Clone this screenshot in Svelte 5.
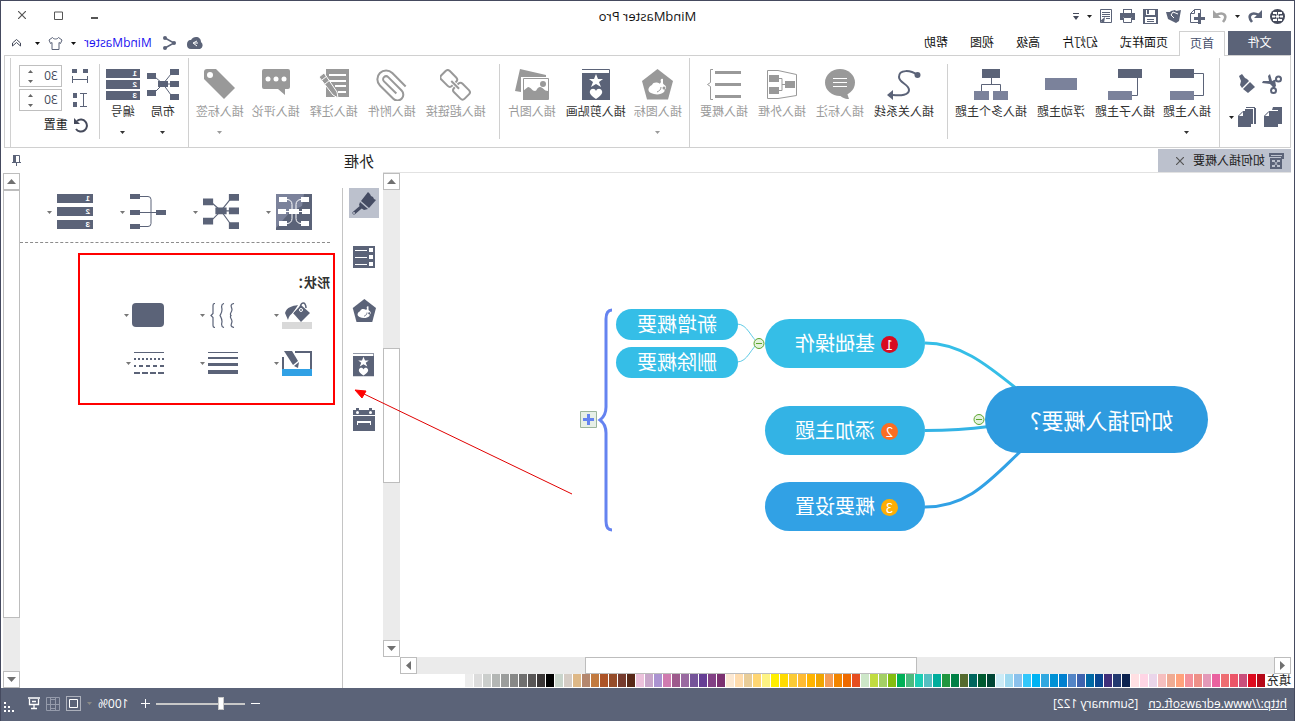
<script lang="ts">
  type Tool = {
    icon: string;
    label: string;
    dim?: boolean;
    split?: boolean;
  };

  type Topic = {
    text: string;
    x: number;
    y: number;
    w: number;
    h: number;
    fill: string;
    size: number;
    badge?: number;
    badgeFill?: string;
  };

  const quick = ['logo', 'redo', 'caret', 'undo', 'newdoc', 'open', 'save', 'print', 'report', 'caret', 'more'];

  const tabs = ['页面样式', '幻灯片', '高级', '视图', '帮助'];

  const groups: { id: string; full: boolean; tools: Tool[] }[] = [
    {
      id: 'topics',
      full: false,
      tools: [
        { icon: 'topic', label: '插入主题', split: true },
        { icon: 'subtopic', label: '插入子主题' },
        { icon: 'floating', label: '浮动主题' },
        { icon: 'multi', label: '插入多个主题' }
      ]
    },
    {
      id: 'relations',
      full: true,
      tools: [
        { icon: 'relation', label: '插入关系线' },
        { icon: 'callout', label: '插入标注', dim: true },
        { icon: 'boundary', label: '插入外框', dim: true },
        { icon: 'summary', label: '插入概要', dim: true }
      ]
    },
    {
      id: 'art',
      full: false,
      tools: [
        { icon: 'mark', label: '插入图标', dim: true, split: true },
        { icon: 'clipart', label: '插入剪贴画' },
        { icon: 'picture', label: '插入图片', dim: true }
      ]
    },
    {
      id: 'attach',
      full: true,
      tools: [
        { icon: 'chain', label: '插入超链接', dim: true },
        { icon: 'clip', label: '插入附件', dim: true },
        { icon: 'note', label: '插入注释', dim: true },
        { icon: 'comment', label: '插入评论', dim: true },
        { icon: 'tag', label: '插入标签', dim: true, split: true }
      ]
    },
    {
      id: 'arrange',
      full: false,
      tools: [
        { icon: 'layout', label: '布局', split: true },
        { icon: 'numbering', label: '编号', split: true }
      ]
    }
  ];

  const topics: Topic[] = [
    { text: '如何插入概要？', x: 83, y: 213, w: 223, h: 67, fill: '#2e9bdf', size: 22 },
    { text: '基础操作', x: 366, y: 146, w: 160, h: 49, fill: '#35bee7', size: 20, badge: 1, badgeFill: '#d80b20' },
    { text: '添加主题', x: 366, y: 233, w: 160, h: 49, fill: '#33b3e5', size: 20, badge: 2, badgeFill: '#fb6e22' },
    { text: '概要设置', x: 366, y: 309, w: 160, h: 49, fill: '#31a1e5', size: 20, badge: 3, badgeFill: '#fdae04' },
    { text: '新增概要', x: 553, y: 136, w: 122, h: 31, fill: '#35bee7', size: 20 },
    { text: '删除概要', x: 553, y: 174, w: 122, h: 31, fill: '#35bee7', size: 20 }
  ];

  const palette = [
    '#b50717', '#dd0a1e', '#c94f7c', '#ec5568', '#ee6d72', '#e9619f', '#e399b8', '#ee9088', '#f3919b', '#ffa27c',
    '#efab93', '#f6bfbf', '#ead5ea', '#ffd5e5', '#ffe0e3', '#0c2350', '#233a70', '#402f7a', '#0a4690', '#0069a5',
    '#3e63ae', '#5485c6', '#0080d0', '#0091d5', '#30a8e0', '#00b3f3', '#33c7fb', '#8bc1ec', '#9ed9f0', '#ccebf6',
    '#004535', '#005a30', '#00665e', '#556b2f', '#008046', '#20963f', '#00ad9c', '#55bfc1', '#1ccdb3', '#4bba7f',
    '#00b058', '#84bd10', '#a4d065', '#c1dc40', '#cde7c8', '#e64e20', '#ee6a00', '#f28500', '#f49c56', '#f0a500',
    '#ffb400', '#ffbb33', '#fbcb35', '#ffdb00', '#ffef00', '#fdf383', '#ffd673', '#e9cd98', '#ffdcae', '#fce8d2',
    '#7b3070', '#824085', '#663f95', '#755499', '#9969a0', '#9d5a8c', '#d07bb0', '#ab93d1', '#c8a6ca', '#ecc2dc',
    '#582817', '#763b2e', '#964d2a', '#ad5427', '#c27a3f', '#b4876e', '#deb887', '#d5ccc5', '#c9d4cb', '#000000',
    '#3b3737', '#585656', '#6f6f6f', '#878887', '#9b9d9c', '#b3b6b4', '#cbcecc', '#dcdcdc', '#ededed'
  ];

  const rail = ['paint', 'outline', 'mark', 'clipart', 'calendar'];
  const styles = ['theme', 'layoutBig', 'structure', 'numberingBig'];
  const shapeTools = ['fill', 'braces', 'rounded', 'line', 'weight', 'dash'];

  let activeRail = $state('paint');
  let gapX = $state(30);
  let gapY = $state(30);
  let zoom = $state(100);
</script>

{#snippet caret()}
  <svg class="caret" width="5" height="3" viewBox="0 0 5 3"><path d="M0 0h5L2.5 3z" fill="currentColor" /></svg>
{/snippet}

{#snippet pentagon()}
  <path d="M15.5 0 31 12l-5 18.500H5L0 12z" fill="currentColor" />
  <path d="M12 17c0-4 8-5 9-1 4 2 5 6 1 8-4 2-10 2-13-1-2-2 1-5 3-6z" fill="#fff" />
  <path d="M10 10c2-1 3 1 2 3l2 3-3 5-4-1c-1-4 3-4 3-6z" fill="#fff" />
  <circle cx="9" cy="19" r="1.500" fill="currentColor" />
  <path d="M12 18c0 3 2 4 4 5" fill="none" stroke="currentColor" />
{/snippet}

{#snippet badgeCard()}
  <path d="M.5 4V.5H28" fill="none" stroke="currentColor" />
  <path d="M0 4h28v27H0z" fill="currentColor" />
  <path d="m14 5 2 5h5l-4 3 2 5-5-3-5 3 2-5-4-3h5z" fill="#fff" />
  <path d="M14 30c-4-3-7-5-6-8 1-3 5-3 6 0 1-3 5-3 6 0 1 3-2 5-6 8z" fill="#fff" />
{/snippet}

{#snippet bars(w: number, step: number)}
  {#each [1, 2, 3] as n}
    <rect x="0" y={(n - 1) * step} width={w} height="9" fill="#5b6378" />
    <text x="3" y={(n - 1) * step + 7} font-size="8" font-weight="700" fill="#fff" font-family="Liberation Sans, sans-serif">{n}</text>
  {/each}
{/snippet}

{#snippet icon(name: string)}
  {#if name === 'caret'}
    {@render caret()}
  {:else if name === 'logo'}
    <svg width="15" height="15" viewBox="0 0 15 15"><circle cx="7.500" cy="7.500" r="7.500" fill="#454a5b" /><path d="M3 3h4v2H3zM8 3h4v2H8zM2 6.500h3v2H2zM6 6.500h3v2H6zM10 6.500h3v2h-3zM3 10h4v2H3zM8 10h4v2H8z" fill="#fff" /><path d="M6 4.500 9 10M9 4.500 6 10M4 7.500h7" stroke="#fff" stroke-width=".6" /></svg>
  {:else if name === 'redo'}
    <svg width="14" height="13" viewBox="0 0 14 13"><path d="M10 12c5-6 1-11-7-7" fill="none" stroke="#5b6378" stroke-width="2.600" /><path d="M0 0v8h8z" fill="#5b6378" /></svg>
  {:else if name === 'undo'}
    <svg width="14" height="13" viewBox="0 0 14 13"><path d="M4 12c-5-6-1-11 7-7" fill="none" stroke="#a3a3a3" stroke-width="2.600" /><path d="M14 0v8H6z" fill="#a3a3a3" /></svg>
  {:else if name === 'newdoc'}
    <svg width="16" height="15" viewBox="0 0 16 15"><path d="M7 13.500h7.500v-9l-4-4H4.500V6M10.500.5v4h4" fill="none" stroke="#5b6378" /><path d="M5.500 4v11M0 9.500h11" stroke="#5b6378" stroke-width="3" /></svg>
  {:else if name === 'open'}
    <svg width="15" height="14" viewBox="0 0 15 14"><path d="m0 1 5 1 1-1 4 1 1 1h4l-2 7-8 4-3-2z" fill="#5b6378" /><path d="m3 5 5-2 2 3-3 3" fill="none" stroke="#fff" /></svg>
  {:else if name === 'save'}
    <svg width="15" height="15" viewBox="0 0 15 15"><path d="M0 0h15v15H0z" fill="#5b6378" /><path d="M3 1h9v5H3zM2 8h11v6H2z" fill="#fff" /><path d="M9 1h2v4H9zM4 10h7v1H4zM4 12h7v1H4z" fill="#5b6378" /></svg>
  {:else if name === 'print'}
    <svg width="15" height="14" viewBox="0 0 15 14"><path d="M3 0h9v4H3zM0 4h15v7H0z" fill="#5b6378" /><path d="M4 1h7v3H4zM3 8h9v5H3z" fill="#fff" /><path d="M3.500 8.500h8v5h-8z" fill="none" stroke="#5b6378" /></svg>
  {:else if name === 'report'}
    <svg width="12" height="14" viewBox="0 0 12 14"><path d="M.5.500h11v13H.500zM2 3.500h8M2 5.500h8M2 7.500h8M2 9.500h4" fill="none" stroke="#5b6378" /><path d="m7 8 5 4-4 2z" fill="#5b6378" /></svg>
  {:else if name === 'more'}
    <svg width="6" height="7" viewBox="0 0 6 7"><path d="M0 .5h6" stroke="#454a5b" /><path d="M0 3h6L3 7z" fill="#454a5b" /></svg>
  {:else if name === 'cloud'}
    <svg width="17" height="12" viewBox="0 0 17 12"><path d="M4 12a4 4 0 0 1-1-7c0-3 2-5 5-5 2 0 4 1 5 3 3 0 4 2 4 5 0 2-1 4-4 4z" fill="#5b6378" /><path d="m7 4 4 2-4 3M10 6H6" fill="none" stroke="#fff" /></svg>
  {:else if name === 'share'}
    <svg width="13" height="14" viewBox="0 0 13 14"><path d="M11 2 2 7l9 5" fill="none" stroke="#5b6378" stroke-width="1.500" /><circle cx="11" cy="2" r="2" fill="#5b6378" /><circle cx="2" cy="7" r="2" fill="#5b6378" /><circle cx="11" cy="12" r="2" fill="#5b6378" /></svg>
  {:else if name === 'shirt'}
    <svg width="15" height="13" viewBox="0 0 15 13"><path d="M4.500.500 1 3l1.500 3.500 1.500-1v7h7v-7l1.500 1L14 3 10.500.500c-1 2-5 2-6 0z" fill="none" stroke="#5b6378" /></svg>
  {:else if name === 'up'}
    <svg width="9" height="8" viewBox="0 0 9 8"><path d="m.5 4 4-3.500 4 3.500M.5 7l4-3.500 4 3.500M.500 4v3M8.500 4v3" fill="none" stroke="#454a5b" /></svg>
  {:else if name === 'cut'}
    <svg width="20" height="20" viewBox="0 0 20 20"><g fill="none" stroke="#5b6378" stroke-width="2"><circle cx="3.500" cy="5" r="2.500" /><circle cx="8.500" cy="16.500" r="2.500" /><path d="m6 6 3 2M8 14l1-5" /></g><path d="m7 6 3 1 2-7 2 2-1 5h6l1 2-8 1-4 4-2-2z" fill="#5b6378" /></svg>
  {:else if name === 'brush'}
    <svg width="18" height="20" viewBox="0 0 18 20"><path d="m14 0 3 2-2 5 1 4-2 3-7-7 2-2 2-1z" fill="#5b6378" /><path d="m6 8 7 7-5 4-7-6z" fill="#5b6378" /></svg>
  {:else if name === 'copy'}
    <svg width="18" height="20" viewBox="0 0 18 20"><path d="M0 0h9v2H2v15H0z" fill="#5b6378" /><path d="M0 0h9l1 3H4v14H0z" fill="#5b6378" /><path d="M4 4h9l5 5v11H4z" fill="#5b6378" /><path d="M13 4v5h5z" fill="#fff" /><path d="m13 4.500 4.500 4.500" stroke="#5b6378" /></svg>
  {:else if name === 'paste'}
    <svg width="18" height="20" viewBox="0 0 18 20"><path d="M0 1h2v16H0zM1 0h9v1H1zM3 2h8v2H5v13H3z" fill="#5b6378" /><path d="M5 4h8l5 5v11H5z" fill="#5b6378" /><path d="M13 4v5h5z" fill="#fff" /><path d="m13 4.500 4.500 4.500" stroke="#5b6378" /></svg>
  {:else if name === 'topic'}
    <svg width="34" height="32" viewBox="0 0 34 32"><path d="M10 0h24v9H10z" fill="#5b6378" /><path d="M10 22h24v9H10z" fill="#7b829b" /><path d="M10 4.500H.500v22H10" fill="none" stroke="#5b6378" /></svg>
  {:else if name === 'subtopic'}
    <svg width="34" height="32" viewBox="0 0 34 32"><path d="M0 0h24v9H0z" fill="#5b6378" /><path d="M10 22h24v9H10z" fill="#7b829b" /><path d="M4.500 9v17.500H10" fill="none" stroke="#5b6378" /></svg>
  {:else if name === 'floating'}
    <svg width="32" height="32" viewBox="0 0 32 32"><path d="M0 9h32v12H0z" fill="#7b829b" /></svg>
  {:else if name === 'multi'}
    <svg width="34" height="32" viewBox="0 0 34 32"><path d="M8 0h18v9H8z" fill="#5b6378" /><path d="M0 22h15v9H0zM19 22h15v9H19z" fill="#7b829b" /><path d="M16.500 9v6.500M7.500 22v-6.500h19V22" fill="none" stroke="#5b6378" /></svg>
  {:else if name === 'relation'}
    <svg width="34" height="32" viewBox="0 0 34 32"><path d="M4 6c6-5 18-6 18 2 0 6-10 7-10 13 0 5 8 6 16 5" fill="none" stroke="#5b6378" stroke-width="2" /><circle cx="3.500" cy="6" r="3" fill="#5b6378" /><path d="m34 26-6-5v10z" fill="#5b6378" /></svg>
  {:else if name === 'callout'}
    <svg width="30" height="32" viewBox="0 0 30 32"><ellipse cx="15" cy="13.500" rx="15" ry="13.500" fill="currentColor" /><path d="m6 30 2-6 8 2c-3 2-5 4-10 4z" fill="currentColor" /><path d="M8 9.500h14M8 13.500h14M8 17.500h14" stroke="#fff" /></svg>
  {:else if name === 'boundary'}
    <svg width="30" height="32" viewBox="0 0 30 32"><path d="M.5 5.500 19 1.500h10.500v28H19L.500 26.500z" fill="none" stroke="currentColor" /><path d="M2 12h10v7H2zM18 6h10v7H18zM18 18h10v7H18z" fill="currentColor" /><path d="M12 15.500h3M18 9.500h-3v12h3" fill="none" stroke="currentColor" /></svg>
  {:else if name === 'summary'}
    <svg width="34" height="32" viewBox="0 0 34 32"><path d="M0 2h26v3H0zM0 14h26v3H0zM0 26h26v3H0z" fill="currentColor" /><path d="M28 .500h2.500v13l3 2-3 2v13H28" fill="none" stroke="currentColor" /></svg>
  {:else if name === 'mark'}
    <svg class="glyph" viewBox="0 0 31 32">{@render pentagon()}</svg>
  {:else if name === 'clipart'}
    <svg class="glyph" viewBox="0 0 28 32">{@render badgeCard()}</svg>
  {:else if name === 'picture'}
    <svg width="34" height="32" viewBox="0 0 34 32"><path d="M3 6 29 0l5 22-6 1V8H3z" fill="currentColor" /><path d="M.5 9.500h25v21H.500z" fill="#fff" stroke="currentColor" /><path d="M1 22c4 0 5-4 8-4s3 4 5 4c3 0 4-4 7-4l5 4v9H1z" fill="currentColor" /><circle cx="6" cy="15" r="3" fill="currentColor" /></svg>
  {:else if name === 'chain'}
    <svg width="31" height="32" viewBox="0 0 31 32"><g fill="none" stroke="currentColor" stroke-width="2" transform="rotate(-45 15.500 15.500)"><path d="M14 18v1c0 2-1 3-3 3H2c-2 0-3-1-3-3v-6c0-2 1-3 3-3h9c2 0 3 1 3 3v1" /><path d="M17 14v-1c0-2 1-3 3-3h9c2 0 3 1 3 3v6c0 2-1 3-3 3h-9c-2 0-3-1-3-3v-1" /><path d="M10 16h11" /></g></svg>
  {:else if name === 'clip'}
    <svg width="32" height="32" viewBox="1 1 22 22"><path d="m21.400 11-9.200 9.200a6 6 0 0 1-8.500-8.500l9.200-9.200a4 4 0 0 1 5.700 5.700l-9.200 9.200a2 2 0 0 1-2.900-2.900l8.500-8.400" fill="none" stroke="currentColor" stroke-width="1.400" transform="rotate(180 12 12)" /></svg>
  {:else if name === 'note'}
    <svg width="31" height="32" viewBox="0 0 31 32"><path d="M0 0h23v28H0z" fill="currentColor" /><path d="M3 6h17M3 12h17M3 17h11M3 23h8" stroke="#fff" stroke-width="2" /><path d="m25 4 5 4-14 18-5 3 1-6z" fill="currentColor" stroke="#fff" /><path d="m22 7 5 4M19 11l5 4" stroke="#fff" /></svg>
  {:else if name === 'comment'}
    <svg width="28" height="32" viewBox="0 0 28 32"><path d="M2 0h24q2 0 2 2v16q0 2-2 2H12l-7 6v-6H2q-2 0-2-2V2q0-2 2-2z" fill="currentColor" /><circle cx="6" cy="10" r="2.500" fill="#fff" /><circle cx="14" cy="10" r="2.500" fill="#fff" /><circle cx="22" cy="10" r="2.500" fill="#fff" /></svg>
  {:else if name === 'tag'}
    <svg width="31" height="32" viewBox="0 0 31 32"><path d="M31 3q0-3-3-3h-9L0 19l11 11 20-20z" fill="currentColor" /><circle cx="25" cy="6" r="3" fill="#fff" /></svg>
  {:else if name === 'layout' || name === 'layoutBig'}
    <svg width={name === 'layout' ? 32 : 36} height={name === 'layout' ? 32 : 36} viewBox="0 0 32 32"><path d="M0 0h9v6H0zM0 12h9v6H0zM0 25h9v6H0zM11 12h10v6H11zM23 4h9v6h-9zM23 21h9v6h-9z" fill="#5b6378" /><path d="m8 5 8 10L8 26M24 8l-8 7 8 8M8 15h8" fill="none" stroke="#5b6378" /></svg>
  {:else if name === 'numbering'}
    <svg width="34" height="32" viewBox="0 0 34 32">{@render bars(34, 11)}</svg>
  {:else if name === 'numberingBig'}
    <svg width="36" height="36" viewBox="0 0 36 36">{@render bars(36, 13)}</svg>
  {:else if name === 'structure'}
    <svg width="36" height="36" viewBox="0 0 36 36"><path d="M0 16h10v5H0zM26 0h10v5H26zM26 16h10v5H26zM26 30h10v5H26z" fill="#5b6378" /><path d="M10 18.500h16M26 2.500h-8q-3 0-3 3v24q0 3 3 3h8" fill="none" stroke="#5b6378" /></svg>
  {:else if name === 'theme'}
    <svg width="36" height="36" viewBox="0 0 36 36"><path d="M0 0h36v36H0z" fill="#5b6378" /><path d="M8 0h28v34L22 18 10 12z" fill="#7b829b" /><path d="M3 3h8v5H3zM2 15h8v5H2zM3 27h8v5H3zM25 3h8v5h-8zM26 15h8v5h-8zM25 27h8v5h-8zM13 15h10v5H13z" fill="#fff" /><path d="M11 5.500c3 0 5 2 5 5v14c0 3-2 5-5 5M25 5.500c-3 0-5 2-5 5v14c0 3 2 5 5 5M10 17.500h16" fill="none" stroke="#fff" /></svg>
  {:else if name === 'gapX'}
    <svg width="16" height="15" viewBox="0 0 16 15"><path d="M0 0h5v4H0zM11 0h5v4h-5z" fill="#5b6378" /><path d="M.5 7v7M15.500 7v7M0 10.500h16" stroke="#5b6378" /></svg>
  {:else if name === 'gapY'}
    <svg width="16" height="15" viewBox="0 0 16 15"><path d="M11 0h4v5h-4zM11 9h4v5h-4z" fill="#5b6378" /><path d="M1 .500h7M1 13.500h7M4.500 0v14" stroke="#5b6378" /></svg>
  {:else if name === 'reset'}
    <svg width="15" height="15" viewBox="0 0 15 15"><path d="M11 3a6 6 0 1 0 1 8" fill="none" stroke="#454a5b" stroke-width="2" /><path d="M14 0v6H8z" fill="#454a5b" /></svg>
  {:else if name === 'doc'}
    <svg width="16" height="16" viewBox="0 0 16 16"><path d="M0 0h15v4h-1v12H2V6H0z" fill="#5b6378" /><path d="M2 2.500h11M3 4.500h11" stroke="#bcc1cd" /><path d="M4 7h3v2H4zM9 7h3v2H9zM4 12h3v2H4zM9 12h3v2H9z" fill="#bcc1cd" /><path d="m6 8 4 5M10 8l-4 5" stroke="#bcc1cd" /></svg>
  {:else if name === 'pin'}
    <svg width="9" height="11" viewBox="0 0 9 11"><path d="M1.500.500h6v7h-6zM0 7.500h9M4.500 8v3" fill="none" stroke="#5b6378" /><path d="M5 0h3v8H5z" fill="#5b6378" /></svg>
  {:else if name === 'paint'}
    <svg width="24" height="24" viewBox="0 0 24 24"><path d="m8 1 7 9-8 7-7-8 2-1 1-2 2-1 1-2z" fill="#454c63" /><path d="m16 11 1 3-2 3-3 2-4-1z" fill="#454c63" /><path d="m15 16 7 6" stroke="#454c63" stroke-width="3" stroke-linecap="round" /><circle cx="22" cy="22" r="1" fill="#bcc1cd" /></svg>
  {:else if name === 'outline'}
    <svg width="22" height="22" viewBox="0 0 22 22"><path d="M0 0h22v22H0z" fill="#5b6378" /><path d="M2 2h4v4H2zM2 9h4v4H2zM2 16h4v4H2zM8 4h12v1H8zM8 11h12v1H8zM8 18h12v1H8z" fill="#fff" /></svg>
  {:else if name === 'calendar'}
    <svg width="22" height="23" viewBox="0 0 22 23"><path d="M0 2h3V0h3v2h10V0h3v2h3v5H0zM0 8h22v15H0z" fill="#5b6378" /><path d="M4 13h14v4h-1v-2H5v2H4z" fill="#fff" /><circle cx="4.500" cy="4.500" r="1.500" fill="#fff" /><circle cx="17.500" cy="4.500" r="1.500" fill="#fff" /></svg>
  {:else if name === 'fill'}
    <svg width="30" height="27" viewBox="0 0 30 27"><path d="M0 20h30v7H0z" fill="#d9d9d9" /><path d="m2 11 9-8 8 8-8 9z" fill="#5b6378" /><path d="M14 3c6 1 11 2 13 8l-3 7q-1-5-5-7z" fill="#5b6378" /><path d="m13 4 7 8" stroke="#fff" /><path d="M6 6c0-7 6-7 6 2" fill="none" stroke="#5b6378" stroke-width="1.500" /><circle cx="11" cy="8" r="1.500" fill="none" stroke="#fff" /></svg>
  {:else if name === 'braces'}
    <svg width="30" height="25" viewBox="0 0 30 25"><path d="M4 .500c5 1 2 4 2 6 0 3 3 4 1 6 2 2-1 3-1 6 0 2 3 5-2 6M14 .500c4 1 2 4 2 6 0 3 1 4 2 6-1 2-2 3-2 6 0 2 2 5-2 6M23 .500q2 0 2 2v8l2 2-2 2v8q0 2-2 2" fill="none" stroke="#5b6378" stroke-width="1.200" /></svg>
  {:else if name === 'rounded'}
    <svg width="32" height="24" viewBox="0 0 32 24"><rect width="32" height="24" rx="4" fill="#5b6378" /></svg>
  {:else if name === 'line'}
    <svg width="30" height="25" viewBox="0 0 30 25"><path d="M17 1H1v17M29 6v12" fill="none" stroke="#5b6378" stroke-width="2" /><path d="M0 18h30v7H0z" fill="#31a1e5" /><path d="M20 0h8l-9 14-5-4z" fill="#5b6378" /><path d="m13 11 5 4-4 2z" fill="#5b6378" /></svg>
  {:else if name === 'weight'}
    <svg width="30" height="25" viewBox="0 0 30 25"><path d="M0 1h30v1H0zM0 6h30v2H0zM0 12h30v3H0zM0 19h30v4H0z" fill="#5b6378" /></svg>
  {:else if name === 'dash'}
    <svg width="30" height="25" viewBox="0 0 30 25"><g stroke="#5b6378" stroke-width="2"><path d="M0 1.500h30" stroke-width="1" /><path d="M0 8h30" stroke-dasharray="2 2" /><path d="M0 15h30" stroke-dasharray="4 3" /><path d="M0 22h30" stroke-dasharray="6 2" /></g></svg>
  {/if}
{/snippet}

{#snippet arrow(dir: string)}
  <button class="step" aria-label={dir}>
    <svg class={dir} width="9" height="5" viewBox="0 0 9 5"><path d="M0 5h9L4.500 0z" fill="#707070" /></svg>
  </button>
{/snippet}

<div class="window">
  <header class="titlebar">
    <div class="quick">
      {#each quick as name}
        <button aria-label={name}>{@render icon(name)}</button>
      {/each}
    </div>
    <div class="title">MindMaster Pro</div>
    <div class="winbtns">
      <button aria-label="minimize"><svg width="7" height="10"><path d="M0 8h7" stroke="#555" stroke-width="2" /></svg></button>
      <button aria-label="maximize"><svg width="9" height="9"><path d="M.500 1h8v7.500h-8z" fill="none" stroke="#555" /></svg></button>
      <button aria-label="close"><svg width="8" height="8"><path d="m0 0 8 8M8 0 0 8" stroke="#555" stroke-width="1.200" /></svg></button>
    </div>
  </header>

  <nav class="tabs">
    <button class="file">文件</button>
    <button class="tab current">首页</button>
    {#each tabs as t}
      <button class="tab">{t}</button>
    {/each}
    <div class="account">
      <button class="net" aria-label="cloud">{@render icon('cloud')}</button>
      <button class="net" aria-label="share">{@render icon('share')}</button>
      <a href="#account">MindMaster</a>
      {@render caret()}
      <button aria-label="skin">{@render icon('shirt')}</button>
      {@render caret()}
      <button class="fold" aria-label="collapse">{@render icon('up')}</button>
    </div>
  </nav>

  <section class="ribbon">
    <div class="clipboard">
      <button aria-label="cut">{@render icon('cut')}</button>
      <button aria-label="format">{@render icon('brush')}</button>
      <button aria-label="copy">{@render icon('copy')}</button>
      <button aria-label="paste">{@render icon('paste')}{@render caret()}</button>
    </div>
    <div class="sep full"></div>
    {#each groups as g}
      <div class="group {g.id}">
        {#each g.tools as t}
          <button class="tool" class:dim={t.dim} class:split={t.split}>
            <span class="pic">{@render icon(t.icon)}</span>
            <span>{t.label}</span>
            {#if t.split}{@render caret()}{/if}
          </button>
        {/each}
      </div>
      <div class="sep" class:full={g.full}></div>
    {/each}
    <div class="spacing">
      <label class="gap">
        {@render icon('gapX')}
        <span class="spin"><input type="number" bind:value={gapX} aria-label="X" /><i>{@render caret()}{@render caret()}</i></span>
      </label>
      <label class="gap">
        {@render icon('gapY')}
        <span class="spin"><input type="number" bind:value={gapY} aria-label="Y" /><i>{@render caret()}{@render caret()}</i></span>
      </label>
      <button class="reset">{@render icon('reset')}重置</button>
    </div>
    <div class="sep full"></div>
  </section>

  <div class="work">
    <main>
      <div class="docs">
        <div class="doc">
          {@render icon('doc')}
          <span>如何插入概要</span>
          <button aria-label="close tab"><svg width="8" height="8"><path d="m0 0 8 8M8 0 0 8" stroke="#555" stroke-width="1.200" /></svg></button>
        </div>
      </div>

      <div class="view">
        <div class="canvas">
          <svg class="links" width="720" height="400" viewBox="0 0 720 400">
            <g fill="none" stroke-width="3">
              <path d="M366 170c-34 0-60 20-92 46" stroke="#35bee7" />
              <path d="M366 257.500c-25 0-42-1-64-4" stroke="#33b3e5" />
              <path d="M366 334c-44 0-66-28-97-57" stroke="#31a1e5" />
            </g>
            <path d="M532 170c8-4 11-19 22-19M532 170c8 4 11 19 22 19" fill="none" stroke="#5fcbe6" />
            <path d="M679 137c5 0 6 4 6 9v88c0 7 2 10 6 13-4 3-6 6-6 13v88c0 5-1 9-6 9" fill="none" stroke="#6583f0" stroke-width="3" />
            <g fill="#e4f2dc" stroke="#5da52f">
              <circle cx="312" cy="246.500" r="5" />
              <circle cx="532" cy="170.500" r="5" />
              <path d="M309 246.500h6M529 170.500h6" />
            </g>
            <path d="M694.500 238.500h16v16h-16z" fill="#e7efe7" stroke="#9cb59c" />
            <path d="M702.500 241v11M697 246.500h11" stroke="#6583f0" stroke-width="3" />
          </svg>
          {#each topics as t}
            <div
              class="topic"
              class:numbered={t.badge}
              style="left:{t.x}px;top:{t.y}px;width:{t.w}px;height:{t.h}px;font-size:{t.size}px;background:{t.fill}"
            >
              {#if t.badge}<b style="background:{t.badgeFill}">{t.badge}</b>{/if}
              {t.text}
            </div>
          {/each}
        </div>
        <div class="vbar">
          {@render arrow('north')}
          <div class="track"><div class="thumb" style="top:35%;height:30%"></div></div>
          {@render arrow('south')}
        </div>
      </div>

      <div class="hbar">
        {@render arrow('west')}
        <div class="track"><div class="thumb" style="left:41.600%;width:38.800%"></div></div>
        {@render arrow('east')}
      </div>

      <div class="palette">
        <span>填充</span>
        {#each palette as c}
          <button aria-label={c} style="background:{c}"></button>
        {/each}
      </div>
    </main>

    <aside>
      <div class="side-head">
        <span>外框</span>
        <button aria-label="pin">{@render icon('pin')}</button>
      </div>
      <div class="side-body">
        <div class="rail">
          {#each rail as name}
            <button aria-label={name} class:on={activeRail === name} onclick={() => (activeRail = name)}>{@render icon(name)}</button>
          {/each}
        </div>
        <div class="options">
          <div class="gallery">
            {#each styles as name}
              <button aria-label={name}>{@render icon(name)}{@render caret()}</button>
            {/each}
          </div>
          <section class="shapes">
            <h2>形状：</h2>
            <div class="shape-grid">
              {#each shapeTools as name}
                <button aria-label={name}>{@render icon(name)}{@render caret()}</button>
              {/each}
            </div>
          </section>
        </div>
        <div class="vbar">
          {@render arrow('north')}
          <div class="track"><div class="thumb" style="top:0;height:89%"></div></div>
          {@render arrow('south')}
        </div>
      </div>
      <svg class="pointer" width="218" height="106" viewBox="0 0 218 106">
        <path d="M0 105 210 4" stroke="#e00000" />
        <path d="m217 1-11 1 4 7z" fill="#f00" stroke="#f00" />
      </svg>
    </aside>
  </div>

  <footer class="status">
    <a href="#edraw">http://www.edrawsoft.cn</a>
    <span>[Summary 122]</span>
    <div class="zoom">
      <button aria-label="zoom out"><svg width="9" height="9"><path d="M0 4.500h9" stroke="#fff" /></svg></button>
      <input type="range" min="50" max="250" bind:value={zoom} aria-label="zoom" />
      <button aria-label="zoom in"><svg width="9" height="9"><path d="M0 4.500h9M4.500 0v9" stroke="#fff" /></svg></button>
      <output>{zoom}%</output>
      <span class="faded">{@render caret()}</span>
      <button aria-label="fit page"><svg width="15" height="15"><path d="M.500.500h14v14H.500z" fill="none" stroke="#fff" stroke-dasharray="1 1" /><path d="M3.500 3.500h8v8h-8z" fill="none" stroke="#fff" /></svg></button>
      <button aria-label="fit width"><svg width="14" height="14"><path d="M.500.500h13v13H.500zM4.500 2.500h5v9h-5zM0 7.500h14M4.500 0v14M9.500 0v14" fill="none" stroke="#959bab" /></svg></button>
      <button aria-label="present"><svg width="12" height="13"><path d="M0 1h12M1.500 2v5.500h9V2M4 4.500h4M6 8v4M3 11.500h6" fill="none" stroke="#fff" stroke-width="1.300" /></svg></button>
      <svg class="grip" width="10" height="10"><path d="M8 0h2v2H8zM4 4h2v2H4zM8 4h2v2H8zM0 8h2v2H0zM4 8h2v2H4zM8 8h2v2H8z" fill="#fff" /></svg>
    </div>
  </footer>
</div>

<style>
  :global(body) {
    background: #fff;
    overflow: hidden;
  }

  .window {
    display: flex;
    flex-direction: column;
    min-height: 100vh;
    box-sizing: border-box;
    border: 1px solid #454a5f;
    border-bottom: 0;
    background: #fff;
    color: #222;
    font-family: 'Open Sans', 'Noto Sans CJK SC', sans-serif;
    font-size: 12px;
    line-height: 16px;
    transform: scaleX(-1);
  }

  button {
    display: flex;
    align-items: center;
    justify-content: center;
    padding: 0;
    border: 0;
    background: none;
    color: inherit;
    font: inherit;
    white-space: nowrap;
  }

  svg {
    display: block;
    flex: none;
  }

  .titlebar {
    display: grid;
    grid-template-columns: 1fr auto 1fr;
    height: 30px;
    align-items: center;
  }

  .quick {
    display: flex;
    align-items: center;
    gap: 8px;
    padding-left: 9px;
  }

  .title {
    color: #111;
    font-size: 13px;
  }

  .winbtns {
    display: flex;
    justify-content: flex-end;
    gap: 28px;
    padding: 0 17px 2px 0;
  }

  .tabs {
    display: flex;
    height: 24px;
    padding-left: 3px;
    color: #111;
  }

  .file {
    width: 63px;
    margin-right: 3px;
    background: #5b6378;
    color: #fff;
  }

  .tab {
    padding: 0 11px;
  }

  .current {
    position: relative;
    z-index: 1;
    margin: 0 0 -1px;
    padding: 0 10px;
    border: 1px solid #d0d0d0;
    border-bottom: 0;
    background: #fff;
    color: #454f6b;
  }

  .account {
    display: flex;
    align-items: center;
    gap: 8px;
    margin-left: auto;
    padding-right: 11px;
  }

  .account a {
    color: #1a10f0;
    text-decoration: none;
  }

  .net {
    margin-right: 3px;
  }

  .fold {
    margin-left: 6px;
  }

  .ribbon {
    display: flex;
    height: 91px;
    margin: 0 3px;
    border: 1px solid #d0d0d0;
  }

  .sep {
    width: 1px;
    margin: 8px 0;
    background: #d0d0d0;
  }

  .sep.full {
    margin: 2px 0 0;
  }

  .clipboard {
    display: grid;
    grid-template-columns: 20px 26px;
    grid-auto-rows: 20px;
    gap: 13px 6px;
    padding: 18px 10px 0 8px;
  }

  .clipboard button {
    justify-content: flex-start;
    gap: 4px;
  }

  .group {
    display: flex;
    padding: 13px 3px 0 4px;
  }

  .topics {
    padding: 13px 2px 0 5px;
  }

  .relations {
    padding: 13px 5px 0 8px;
  }

  .attach {
    padding: 13px 4px 0 8px;
  }

  .arrange {
    gap: 1px;
    padding: 13px 3px 0 6px;
  }

  .tool {
    flex-direction: column;
    justify-content: flex-start;
    padding: 0 5px;
    color: #333;
  }

  .tool.split {
    padding: 0 3px;
  }

  .tool.dim {
    color: #9b9b9b;
  }

  .pic {
    height: 32px;
    margin-bottom: 3px;
    color: #5b6378;
  }

  .dim .pic {
    color: #999;
  }

  .pic .glyph {
    height: 32px;
  }

  .tool .caret {
    margin-top: 11px;
  }

  .spacing {
    display: flex;
    flex-direction: column;
    gap: 2px;
    padding: 9px 8px 0 11px;
  }

  .gap {
    display: flex;
    align-items: center;
    gap: 10px;
  }

  .spin {
    display: flex;
    align-items: center;
    box-sizing: border-box;
    width: 43px;
    height: 22px;
    padding: 0 7px 0 2px;
    border: 1px solid #bfbfbf;
  }

  .spin input {
    width: 26px;
    padding: 0 0 0 1px;
    border: 0;
    box-sizing: border-box;
    outline: 0;
    background: none;
    color: #454a5b;
    font: inherit;
    font-size: 12px;
    appearance: textfield;
  }

  .spin input::-webkit-inner-spin-button {
    display: none;
  }

  .spin i {
    display: flex;
    flex-direction: column;
    gap: 7px;
    color: #666;
  }

  .spin i .caret:first-child {
    transform: scaleY(-1);
  }

  .reset {
    justify-content: flex-start;
    gap: 5px;
    height: 24px;
  }

  .work {
    display: flex;
    flex: 1;
  }

  main {
    display: flex;
    flex: 1;
    flex-direction: column;
    min-width: 0;
    padding-left: 3px;
  }

  .docs {
    display: flex;
    height: 23px;
    padding-top: 1px;
    border-bottom: 1px solid #e2e2e2;
  }

  .doc {
    display: flex;
    align-items: center;
    gap: 3px;
    width: 126px;
    padding-left: 7px;
    background: #bcc1cd;
    white-space: nowrap;
  }

  .doc button {
    margin-left: 6px;
  }

  .view {
    display: flex;
    flex: 1;
  }

  .canvas {
    position: relative;
    flex: 1;
    min-width: 0;
    overflow: hidden;
  }

  .links {
    position: absolute;
    top: 0;
    left: 0;
  }

  .topic {
    position: absolute;
    display: flex;
    align-items: center;
    justify-content: center;
    box-sizing: border-box;
    padding-bottom: 2px;
    border-radius: 34px;
    color: #fff;
    font-family: 'Noto Sans CJK SC', sans-serif;
    white-space: nowrap;
  }

  .topic.numbered {
    justify-content: flex-start;
    gap: 6px;
    padding-left: 27px;
  }

  .topic b {
    width: 17px;
    margin-top: 4px;
    border-radius: 50%;
    font-size: 13px;
    font-weight: 400;
    line-height: 17px;
    text-align: center;
  }

  .vbar {
    display: flex;
    flex-direction: column;
    width: 17px;
  }

  .hbar {
    display: flex;
    height: 17px;
    margin-right: 17px;
  }

  .track {
    position: relative;
    flex: 1;
    background: #ebebeb;
  }

  .thumb {
    position: absolute;
    box-sizing: border-box;
    border: 1px solid #bdbdbd;
    background: #fff;
  }

  .vbar .thumb {
    width: 100%;
  }

  .hbar .thumb {
    height: 100%;
  }

  .step {
    box-sizing: border-box;
    width: 17px;
    height: 17px;
    border: 1px solid #bdbdbd;
    background: #fff;
  }

  .south {
    transform: rotate(180deg);
  }

  .west {
    transform: rotate(-90deg);
  }

  .east {
    transform: rotate(90deg);
  }

  .palette {
    display: flex;
    gap: 1px;
    height: 14px;
    line-height: 14px;
  }

  .palette span {
    width: 25px;
  }

  .palette button {
    width: 8px;
    height: 13px;
  }

  aside {
    position: relative;
    display: flex;
    flex-direction: column;
    width: 382px;
  }

  .side-head {
    display: flex;
    align-items: center;
    justify-content: space-between;
    height: 25px;
    padding: 0 11px 0 9px;
    font-size: 15px;
  }

  .side-body {
    display: flex;
    flex: 1;
    padding-right: 2px;
  }

  .rail {
    display: flex;
    flex-direction: column;
    gap: 24px;
    width: 36px;
    margin-top: 15px;
    padding-left: 4px;
    border-right: 1px solid #c4c4c4;
    color: #5b6378;
  }

  .rail button {
    width: 30px;
    height: 30px;
  }

  .rail button.on {
    background: #bcc1cd;
  }

  .rail .glyph {
    height: 24px;
  }

  .options {
    flex: 1;
  }

  .gallery {
    display: grid;
    grid-template-columns: repeat(4, 73px);
    margin-left: 12px;
    padding: 21px 0 12px 18px;
    border-bottom: 1px dashed #8c8c8c;
  }

  .gallery button,
  .shape-grid button {
    justify-content: flex-start;
    gap: 5px;
    color: #777;
  }

  .shape-grid button {
    gap: 3px;
  }

  .shapes {
    width: 253px;
    margin: 10px 0 0 7px;
    padding: 18px 0 16px;
    border: 2px solid #f00;
  }

  h2 {
    margin: 0;
    padding-left: 3px;
    color: #333;
    font-size: 13px;
    line-height: 18px;
  }

  .shape-grid {
    display: grid;
    grid-template-columns: repeat(3, 74px);
    grid-auto-rows: 48px;
    padding-left: 21px;
  }

  .pointer {
    position: absolute;
    top: 241px;
    left: -189px;
  }

  .status {
    display: flex;
    align-items: center;
    gap: 10px;
    box-sizing: border-box;
    height: 33px;
    padding: 0 3px 2px 7px;
    background: #5b6378;
    color: #fff;
  }

  .status a {
    color: #fff;
  }

  .zoom {
    display: flex;
    align-items: center;
    gap: 6px;
    margin-left: auto;
  }

  .zoom input {
    width: 89px;
    height: 13px;
    margin: 0;
    background: linear-gradient(#c8c8c8, #c8c8c8) center / 100% 2px no-repeat;
    appearance: none;
  }

  .zoom input::-webkit-slider-thumb {
    width: 6px;
    height: 13px;
    border: 1px solid #c8c8c8;
    background: #fff;
    appearance: none;
  }

  .zoom output {
    margin-left: 6px;
  }

  .faded {
    color: #8a8a86;
  }

  .grip {
    align-self: flex-end;
    margin-left: 8px;
  }
</style>
